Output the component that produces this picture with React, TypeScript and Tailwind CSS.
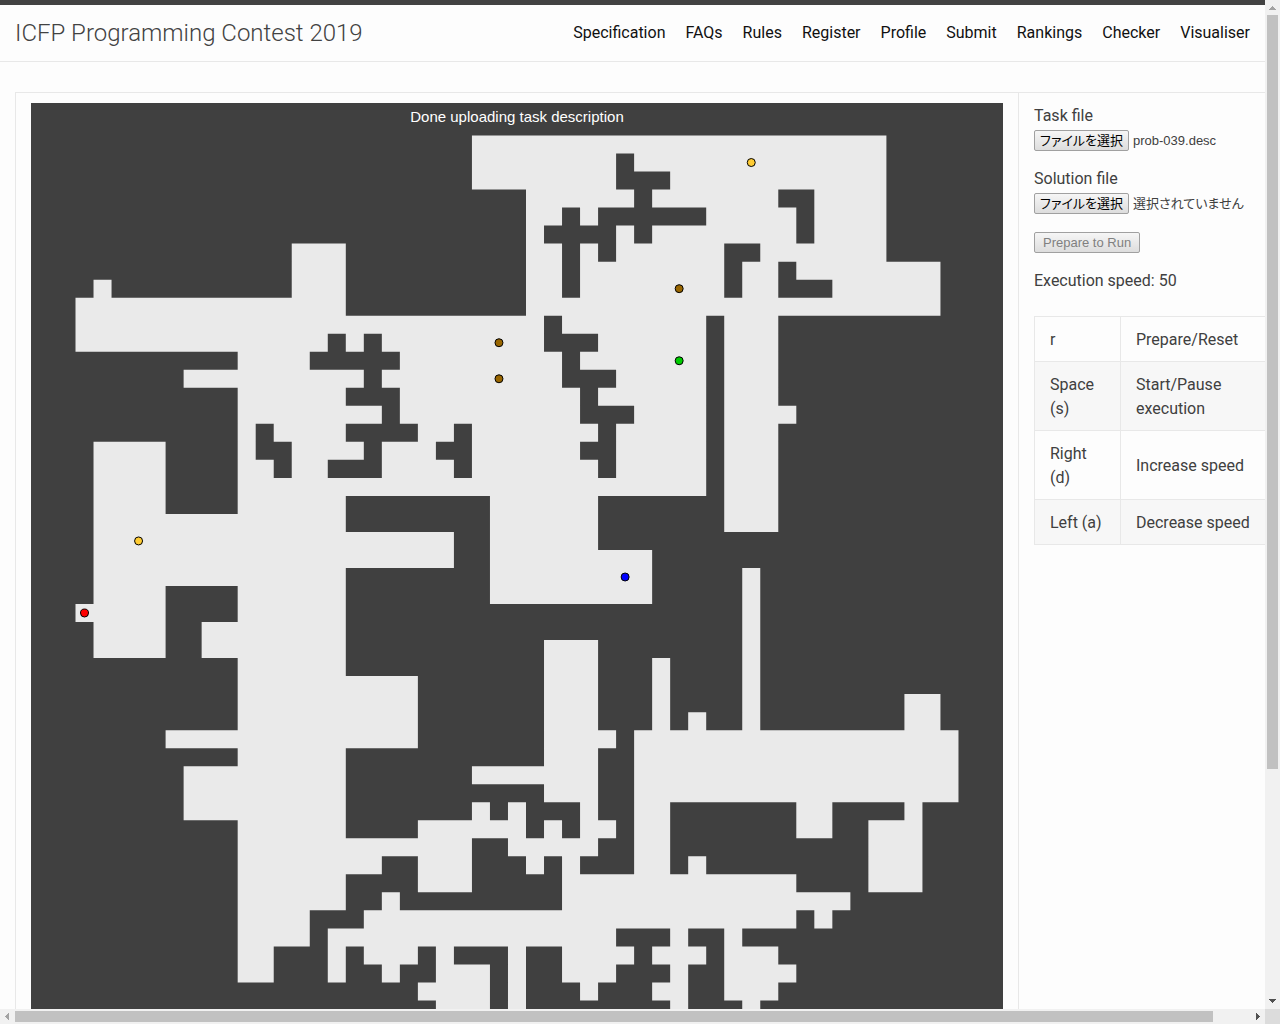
import React from 'react';

const NAV = ['Specification', 'FAQs', 'Rules', 'Register', 'Profile', 'Submit', 'Rankings', 'Checker', 'Visualiser'];

const SHORTCUTS: [string, string][] = [
  ['r', 'Prepare/Reset'],
  ['Space (s)', 'Start/Pause execution'],
  ['Right (d)', 'Increase speed'],
  ['Left (a)', 'Decrease speed'],
];

// Open floor of the mine, one entry per row: spans of columns, end exclusive.
const FLOOR = [
  '22-45',
  '22-30 31-45',
  '22-30 33-45',
  '25-31 32-39 41-45',
  '25-27 28-29 35-40 41-45',
  '25-26 30-31 32-40 41-45',
  '12-15 25-27 28-29 30-36 38-45',
  '12-15 25-27 28-36 37-39 40-48',
  '1-2 12-15 25-27 28-36 37-39 42-48',
  '0-15 25-48',
  '0-26 27-35 36-39',
  '0-14 15-16 17-26 29-35 36-39',
  '9-13 18-27 28-35 36-39',
  '6-16 17-27 30-35 36-39',
  '9-15 18-28 29-35 36-39',
  '9-17 18-28 31-35 36-40',
  '9-10 11-15 19-21 22-29 30-35 36-39',
  '1-5 9-10 12-16 17-20 22-28 30-35 36-39',
  '1-5 9-11 12-14 17-21 22-29 30-35 36-39',
  '1-5 9-35 36-39',
  '1-5 9-15 23-29 36-39',
  '1-15 23-29 36-39',
  '1-21 23-29',
  '1-21 23-32',
  '1-15 23-32 37-38',
  '1-5 9-15 23-32 37-38',
  '0-5 9-15 37-38',
  '1-5 7-15 37-38',
  '1-5 7-15 26-29 37-38',
  '9-15 26-29 32-33 37-38',
  '9-19 26-29 32-33 37-38',
  '9-19 26-29 32-33 37-38 46-48',
  '9-19 26-29 32-33 34-35 37-38 46-48',
  '5-19 26-30 31-49',
  '9-15 26-29 31-49',
  '6-15 22-29 31-49',
  '6-15 26-29 31-49',
  '6-15 22-23 24-25 28-29 31-33 40-42 46-47',
  '9-15 19-25 26-27 28-30 31-33 40-42 44-47',
  '9-22 24-29 31-33 44-47',
  '9-17 19-22 25-26 27-28 31-33 34-35 44-47',
  '9-15 19-22 27-40 44-47',
  '9-15 17-18 27-43',
  '9-13 16-40 41-42',
  '9-13 14-30 33-34 36-37',
  '9-11 14-15 16-19 20-21 24-25 27-31 32-35 36-39',
  '9-11 14-15 17-18 20-23 24-25 27-30 33-34 36-40',
  '19-23 24-25 28-29 32-34 36-39',
  '20-23 24-25 33-34 37-38',
];

const BOOSTERS = [
  { col: 37, row: 1, fill: '#ffcc33' },
  { col: 33, row: 8, fill: '#996600' },
  { col: 23, row: 11, fill: '#996600' },
  { col: 23, row: 13, fill: '#996600' },
  { col: 33, row: 12, fill: '#00cc00' },
  { col: 3, row: 22, fill: '#ffcc33' },
  { col: 30, row: 24, fill: '#0000ff' },
  { col: 0, row: 26, fill: '#ff0000' },
];

const CELL = 18.02;
const LEFT = 44.5;
const TOP = 32.5;

const floorPath = FLOOR.map((line, row) =>
  line
    .split(' ')
    .map((span) => {
      const [a, b] = span.split('-').map(Number);
      const x = LEFT + a * CELL;
      const y = TOP + row * CELL;
      return `M${x} ${y}H${LEFT + b * CELL}V${y + CELL}H${x}Z`;
    })
    .join(''),
).join('');

function MineMap() {
  return (
    <div className="bg-[#404040]">
      <p className="h-7 text-center font-['Liberation_Sans',sans-serif] text-[15px] leading-7 text-white">
        Done uploading task description
      </p>
      <svg viewBox="0 28 972 944" className="block h-auto w-full" role="img" aria-label="Mine map">
        <path d={floorPath} fill="#eaeaea" />
        {BOOSTERS.map((b) => (
          <circle
            key={`${b.col}-${b.row}`}
            cx={LEFT + (b.col + 0.5) * CELL}
            cy={TOP + (b.row + 0.5) * CELL}
            r="4"
            fill={b.fill}
            stroke="#000"
          />
        ))}
      </svg>
    </div>
  );
}

function FileField({ id, title, fileName }: { id: string; title: string; fileName: string }) {
  return (
    <div className="mb-4">
      <label htmlFor={id} className="block">
        {title}
      </label>
      <div className="flex h-[23px] items-end gap-1 font-['Liberation_Sans','Noto_Sans_CJK_JP',sans-serif] text-[13px] leading-[19px] [font-feature-settings:'palt']">
        <input id={id} type="file" className="peer sr-only" />
        <label
          htmlFor={id}
          className="h-[21px] w-[95px] overflow-hidden rounded-xs border border-[#a0a0a0] bg-linear-to-b from-[#f6f6f6] to-[#dddddd] text-center whitespace-nowrap text-black peer-focus-visible:outline-2"
        >
          ファイルを選択
        </label>
        <span className="h-[21px] leading-[21px] whitespace-nowrap">{fileName}</span>
      </div>
    </div>
  );
}

function Arrow({ d, dark }: { d: string; dark?: boolean }) {
  return (
    <svg viewBox="0 0 15 15" className="size-[15px] shrink-0" shapeRendering="crispEdges">
      <path d={d} fill={dark ? '#505050' : '#a3a3a3'} />
    </svg>
  );
}

export default function App() {
  return (
    <div className="grid h-screen grid-cols-[minmax(0,1fr)_15px] grid-rows-[minmax(0,1fr)_15px] bg-[#fdfdfd] font-[Roboto,sans-serif] text-base leading-6 text-[#404040]">
      <div className="overflow-hidden">
        <header className="flex items-center justify-between border-t-5 border-b border-t-[#424242] border-b-[#e8e8e8] px-[15px]">
          <a href="#" className="text-2xl leading-[56px] font-light whitespace-nowrap text-[#424242]">
            ICFP Programming Contest 2019
          </a>
          <nav className="flex gap-5 leading-[56px] text-[#111]">
            {NAV.map((item) => (
              <a key={item} href="#">
                {item}
              </a>
            ))}
          </nav>
        </header>

        <main className="flex pt-[30px] pl-[15px]">
          <section className="min-w-0 flex-1 border-t border-l border-[#e8e8e8] px-[15px] py-[10px]">
            <MineMap />
          </section>
          <aside className="w-[247px] shrink-0 border-t border-l border-[#e8e8e8] py-[11px] pl-[15px]">
            <FileField id="task" title="Task file" fileName="prob-039.desc" />
            <FileField id="solution" title="Solution file" fileName="選択されていません" />
            <div className="mb-4 flex h-[23px] items-end">
              <button
                type="button"
                disabled
                className="h-[21px] rounded-xs border border-[#a0a0a0] bg-linear-to-b from-[#f6f6f6] to-[#dddddd] px-2 font-['Liberation_Sans',sans-serif] text-[13px] leading-[19px] whitespace-nowrap text-[#808080]"
              >
                Prepare to Run
              </button>
            </div>
            <p className="mb-[23px]">Execution speed: 50</p>
            <table className="w-[233px] table-fixed border-collapse border border-[#e8e8e8]">
              <tbody>
                {SHORTCUTS.map(([keyName, action]) => (
                  <tr key={keyName} className="even:bg-[#f7f7f7]">
                    <td className="w-[86px] border border-[#e8e8e8] px-[15px] pt-[11px] pb-[9px]">{keyName}</td>
                    <td className="border border-[#e8e8e8] pt-[11px] pb-[9px] pl-[15px]">{action}</td>
                  </tr>
                ))}
              </tbody>
            </table>
          </aside>
        </main>
      </div>

      <div className="flex flex-col bg-[#f1f1f1]" aria-hidden="true">
        <Arrow d="M7 6h1v1h1v1h1v1h1v1H4V9h1V8h1V7h1z" />
        <div className="min-h-0 flex-1 px-[2px]">
          <div className="h-[77%] bg-[#c1c1c1]" />
        </div>
        <Arrow dark d="M4 5h7v1h-1v1H9v1H8v1H7V8H6V7H5V6H4z" />
      </div>
      <div className="flex bg-[#f1f1f1]" aria-hidden="true">
        <Arrow d="M9 4v7H8v-1H7V9H6V8H5V7h1V6h1V5h1V4z" />
        <div className="min-w-0 flex-1 py-[2px]">
          <div className="h-full w-[97%] bg-[#c1c1c1]" />
        </div>
        <Arrow dark d="M6 4v7h1v-1h1V9h1V8h1V7H9V6H8V5H7V4z" />
      </div>
      <div className="bg-[#dcdcdc]" />
    </div>
  );
}
